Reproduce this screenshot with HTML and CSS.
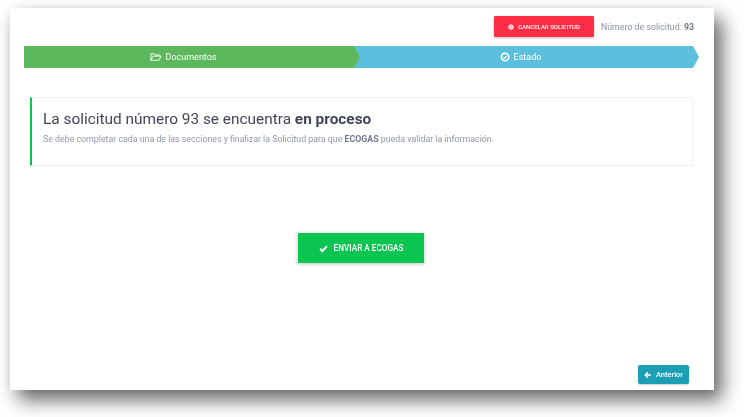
FILE: index.html
```html
<!DOCTYPE html>
<html lang="es">
<head>
  <meta charset="UTF-8" />
  <title>Solicitud 93</title>
  <link rel="stylesheet" href="styles.css">
</head>
<body>
  <div class="hoja">
    <div class="cabecera">
      <button class="btn-cancelar">
        <svg class="icono-cancelar" viewBox="0 0 16 16"><circle cx="8" cy="8" r="5.5" fill="none" stroke="#fff" stroke-width="3"/><path d="M4 4l8 8" stroke="#fff" stroke-width="3"/></svg>
        CANCELAR SOLICITUD
      </button>
      <span class="numero">Número de solicitud: <b>93</b></span>
    </div>

    <div class="pasos">
      <div class="paso paso-estado">
        <svg class="icono" viewBox="0 0 16 16"><circle cx="8" cy="8" r="6" fill="none" stroke="#fff" stroke-width="2.4"/><path d="M5.2 8.2l2 2 3.6-4" fill="none" stroke="#fff" stroke-width="1.8"/></svg>
        Estado
      </div>
      <div class="paso paso-documentos">
        <svg class="icono-carpeta" viewBox="0 0 20 16"><path d="M1.5 13.5V2.5H7l1.5 2H15.5V6.5M1.5 13.5H15l3.5-7H5z" fill="none" stroke="#fff" stroke-width="1.5" stroke-linejoin="round"/></svg>
        Documentos
      </div>
    </div>

    <div class="aviso">
      <h2>La solicitud número 93 se encuentra <b>en proceso</b></h2>
      <p>Se debe completar cada una de las secciones y finalizar la Solicitud para que <b>ECOGAS</b> pueda validar la información.</p>
    </div>

    <div class="centro">
      <button class="btn-enviar">
        <svg class="icono-check" viewBox="0 0 16 16"><path d="M2 8.5l4 4 8-8.5" fill="none" stroke="#fff" stroke-width="3.4"/></svg>
        ENVIAR A ECOGAS
      </button>
    </div>

    <div class="pie">
      <button class="btn-anterior">
        <svg class="icono-flecha" viewBox="0 0 16 16"><path d="M8 2.5L2.5 8 8 13.5M3 8H14" fill="none" stroke="#fff" stroke-width="3"/></svg>
        Anterior
      </button>
    </div>
  </div>
</body>
</html>
```

FILE: styles.css
```css
html, body {
  height: 100%;
}
body {
  margin: 0;
  padding: 8px 30px 27px 10px;
  box-sizing: border-box;
  background-color: #ffffff;
  font-family: 'Roboto', sans-serif;
  overflow: hidden;
}
button {
  font-family: 'Roboto', sans-serif;
  border: none;
  color: #fff;
  display: flex;
  align-items: center;
  justify-content: center;
}
.hoja {
  height: 382px;
  background-color: #fff;
  box-shadow: 8px 10px 18px rgba(0, 0, 0, 0.6), -3px 0 8px rgba(0, 0, 0, 0.05);
  padding: 8px 20px 6px 14px;
  box-sizing: border-box;
  display: flex;
  flex-direction: column;
  filter: blur(0.35px);
}
.cabecera {
  display: flex;
  justify-content: flex-end;
  align-items: center;
  height: 21px;
  gap: 7px;
}
.btn-cancelar {
  width: 100px;
  height: 21px;
  background-color: #ff2d46;
  font-size: 6px;
  font-weight: 500;
  gap: 4px;
  border-radius: 1px;
  box-shadow: 0 1px 3px rgba(0, 0, 0, 0.25);
}
.icono-cancelar {
  width: 6px;
  height: 6px;
}
.numero {
  width: 93px;
  font-size: 8.8px;
  color: #8b93a7;
  white-space: nowrap;
}
.numero b {
  color: #6f778c;
  font-weight: 700;
}
.pasos {
  position: relative;
  height: 22px;
  margin-top: 9px;
  margin-right: -5px;
  color: #fff;
  font-size: 9px;
  font-weight: 400;
}
.paso {
  display: flex;
  align-items: center;
  justify-content: center;
  gap: 4px;
  height: 22px;
}
.paso-documentos {
  position: absolute;
  left: 0;
  top: 0;
  width: 336px;
  padding-right: 18px;
  box-sizing: border-box;
  background-color: #5cb85c;
  clip-path: polygon(0 0, 330px 0, 336px 50%, 330px 100%, 0 100%);
}
.paso-estado {
  background-color: #5bc0de;
  padding-left: 336px;
  padding-right: 18px;
  clip-path: polygon(0 0, calc(100% - 6px) 0, 100% 50%, calc(100% - 6px) 100%, 0 100%);
}
.icono {
  width: 10px;
  height: 10px;
}
.icono-carpeta {
  width: 12px;
  height: 10px;
}
.aviso {
  margin: 29px 1px 0 6px;
  height: 69px;
  box-sizing: border-box;
  border: 1px solid #f0f1f4;
  border-left: 2px solid #0ac552;
  padding: 11px 11px;
}
.aviso h2 {
  margin: 0;
  font-size: 15.4px;
  line-height: 20px;
  font-weight: 400;
  color: #3f4759;
}
.aviso h2 b {
  font-weight: 700;
}
.aviso p {
  margin: 5px 0 0 0;
  font-size: 8.8px;
  line-height: 11px;
  color: #8f97ab;
}
.aviso p b {
  color: #6f778c;
}
.centro {
  display: flex;
  justify-content: center;
  margin-top: 67px;
  padding-left: 4px;
}
.btn-enviar {
  width: 126px;
  height: 30px;
  background-color: #0ac552;
  font-size: 8.2px;
  font-weight: 500;
  gap: 6px;
  box-shadow: 0 1px 4px rgba(0, 0, 0, 0.25);
}
.icono-check {
  width: 9px;
  height: 9px;
}
.pie {
  margin-top: auto;
  display: flex;
  justify-content: flex-end;
  padding-right: 5px;
}
.btn-anterior {
  width: 51px;
  height: 19px;
  background-color: #1c9fb5;
  border-radius: 2px;
  font-size: 7.5px;
  font-weight: 500;
  gap: 4px;
  box-shadow: 0 1px 2px rgba(0, 0, 0, 0.2);
}
.icono-flecha {
  width: 8px;
  height: 8px;
}
```
